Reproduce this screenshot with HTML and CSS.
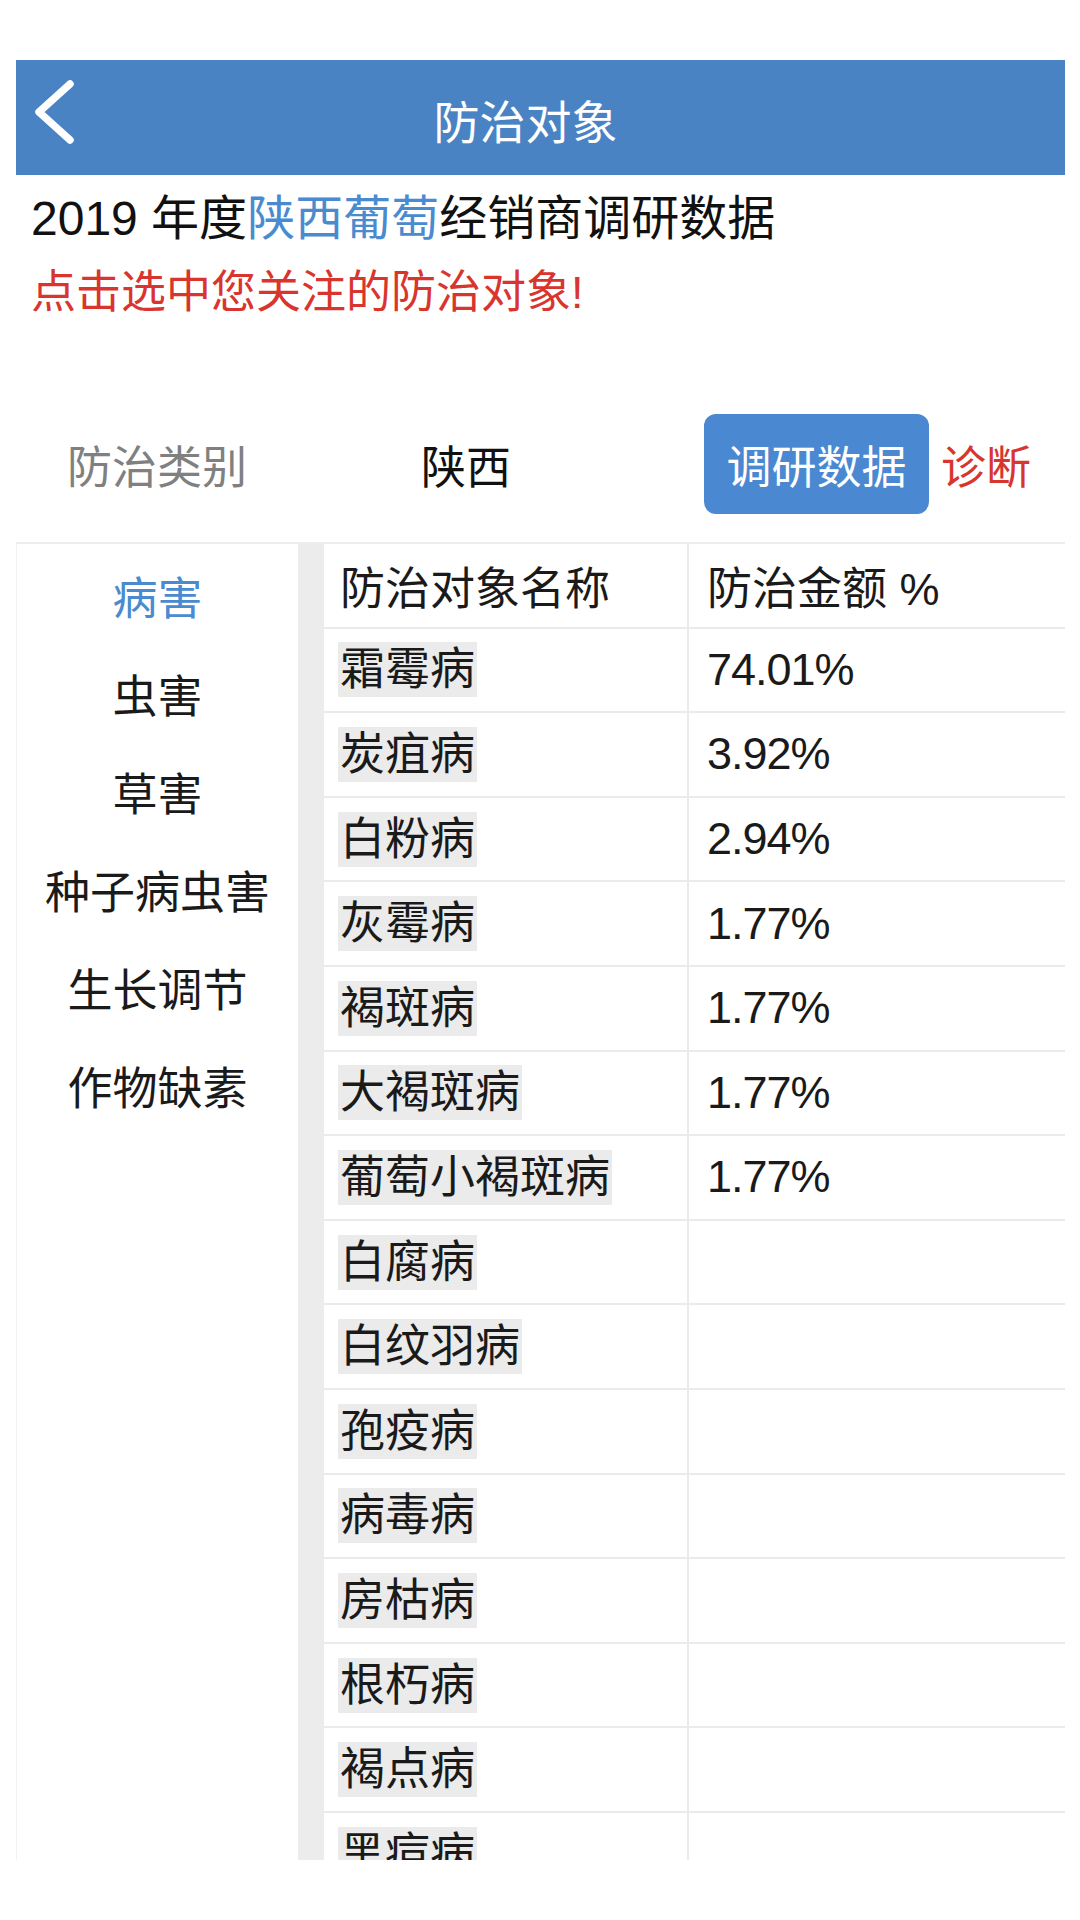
FILE: index.html
```html
<!DOCTYPE html>
<html lang="zh-CN">
<head>
    <meta charset="UTF-8">
    <meta name="viewport" content="width=device-width, initial-scale=1.0">
    <title>防治对象</title>
    <link rel="stylesheet" href="styles.css">
</head>
<body>
    <div class="page">
        <div class="topbar">
            <a class="back" href="#">
                <svg width="100" height="115" viewBox="0 0 100 115">
                    <path d="M54 24 L23 52 L54 80" fill="none" stroke="#fff" stroke-width="7.5" stroke-linecap="round" stroke-linejoin="round"/>
                </svg>
            </a>
            <h1>防治对象</h1>
            <div></div>
        </div>

        <div class="intro">
            <p class="title">2019 年度<span class="hl">陕西葡萄</span>经销商调研数据</p>
            <p class="hint">点击选中您关注的防治对象!</p>
        </div>

        <div class="tabs">
            <div class="tab-cat">防治类别</div>
            <div class="tab-region">陕西</div>
            <button class="tab-btn">调研数据</button>
            <div class="tab-diag">诊断</div>
        </div>

        <div class="main">
            <ul class="side">
                <li class="active">病害</li>
                <li>虫害</li>
                <li>草害</li>
                <li>种子病虫害</li>
                <li>生长调节</li>
                <li>作物缺素</li>
            </ul>
            <div class="strip"></div>
            <div class="table">
                <div class="row head">
                    <div class="cell name">防治对象名称</div>
                    <div class="cell pct">防治金额 %</div>
                </div>
                <div class="row"><div class="cell name"><span>霜霉病</span></div><div class="cell pct">74.01%</div></div>
                <div class="row"><div class="cell name"><span>炭疽病</span></div><div class="cell pct">3.92%</div></div>
                <div class="row"><div class="cell name"><span>白粉病</span></div><div class="cell pct">2.94%</div></div>
                <div class="row"><div class="cell name"><span>灰霉病</span></div><div class="cell pct">1.77%</div></div>
                <div class="row"><div class="cell name"><span>褐斑病</span></div><div class="cell pct">1.77%</div></div>
                <div class="row"><div class="cell name"><span>大褐斑病</span></div><div class="cell pct">1.77%</div></div>
                <div class="row"><div class="cell name"><span>葡萄小褐斑病</span></div><div class="cell pct">1.77%</div></div>
                <div class="row"><div class="cell name"><span>白腐病</span></div><div class="cell pct"></div></div>
                <div class="row"><div class="cell name"><span>白纹羽病</span></div><div class="cell pct"></div></div>
                <div class="row"><div class="cell name"><span>孢疫病</span></div><div class="cell pct"></div></div>
                <div class="row"><div class="cell name"><span>病毒病</span></div><div class="cell pct"></div></div>
                <div class="row"><div class="cell name"><span>房枯病</span></div><div class="cell pct"></div></div>
                <div class="row"><div class="cell name"><span>根朽病</span></div><div class="cell pct"></div></div>
                <div class="row"><div class="cell name"><span>褐点病</span></div><div class="cell pct"></div></div>
                <div class="row"><div class="cell name"><span>黑痘病</span></div><div class="cell pct"></div></div>
            </div>
        </div>
    </div>
</body>
</html>
```
FILE: styles.css
```css
body {
    margin: 0;
    background-color: #fff;
    font-family: "Liberation Sans", "Noto Sans CJK SC", sans-serif;
    color: #222;
}
.page {
    width: 1049px;
    margin: 60px 0 0 16px;
}
.topbar {
    display: grid;
    grid-template-columns: 100px 1fr 130px;
    align-items: center;
    height: 115px;
    background-color: #4a83c4;
}
.back svg {
    display: block;
}
.topbar h1 {
    margin: 0;
    padding-top: 2px;
    font-size: 46px;
    font-weight: 400;
    color: #fff;
    text-align: center;
}
.intro {
    padding: 12px 15px 0;
}
.intro p {
    margin: 0;
    line-height: 64px;
}
.intro .title {
    font-size: 48px;
    color: #111;
}
.intro .hl {
    color: #4a8bcf;
}
.intro .hint {
    margin-top: 10px;
    font-size: 45px;
    color: #d8352f;
}
.tabs {
    display: flex;
    align-items: center;
    margin-top: 89px;
    padding-bottom: 28px;
    border-bottom: 2px solid #ededed;
    font-size: 45px;
}
.tab-cat {
    width: 282px;
    text-align: center;
    color: #808080;
}
.tab-region {
    width: 336px;
    text-align: center;
    color: #111;
}
.tab-btn {
    display: flex;
    align-items: center;
    justify-content: center;
    width: 225px;
    height: 100px;
    margin-left: 70px;
    padding: 0;
    border: none;
    border-radius: 12px;
    background-color: #4a88d1;
    color: #fff;
    font-family: inherit;
    font-size: 45px;
}
.tab-diag {
    margin-left: 12px;
    color: #d8352f;
}
.main {
    display: flex;
    height: 1316px;
    overflow: hidden;
    border-left: 1px solid #f2f2f2;
}
.side {
    width: 281px;
    margin: 0;
    padding: 2px 0 0;
    list-style: none;
}
.side li {
    display: flex;
    align-items: center;
    justify-content: center;
    height: 98px;
    font-size: 45px;
    color: #1a1a1a;
}
.side li.active {
    color: #4a8bcf;
}
.strip {
    width: 26px;
    background-color: #ececec;
}
.table {
    flex: 1;
}
.row {
    display: flex;
    height: 84.6px;
    box-sizing: border-box;
    border-bottom: 2px solid #ebebeb;
    font-size: 45px;
    color: #1a1a1a;
}
.cell {
    display: flex;
    align-items: center;
    box-sizing: border-box;
}
.cell.name {
    width: 365px;
    padding-left: 14px;
    border-right: 2px solid #ebebeb;
}
.row.head .cell.name {
    padding-left: 16px;
}
.cell.name span {
    display: inline-block;
    padding: 0 2px;
    line-height: 55px;
    background-color: #ebebeb;
}
.cell.pct {
    flex: 1;
    padding-left: 18px;
    letter-spacing: -1px;
}
.row.head .cell.pct {
    letter-spacing: 0;
}
```
